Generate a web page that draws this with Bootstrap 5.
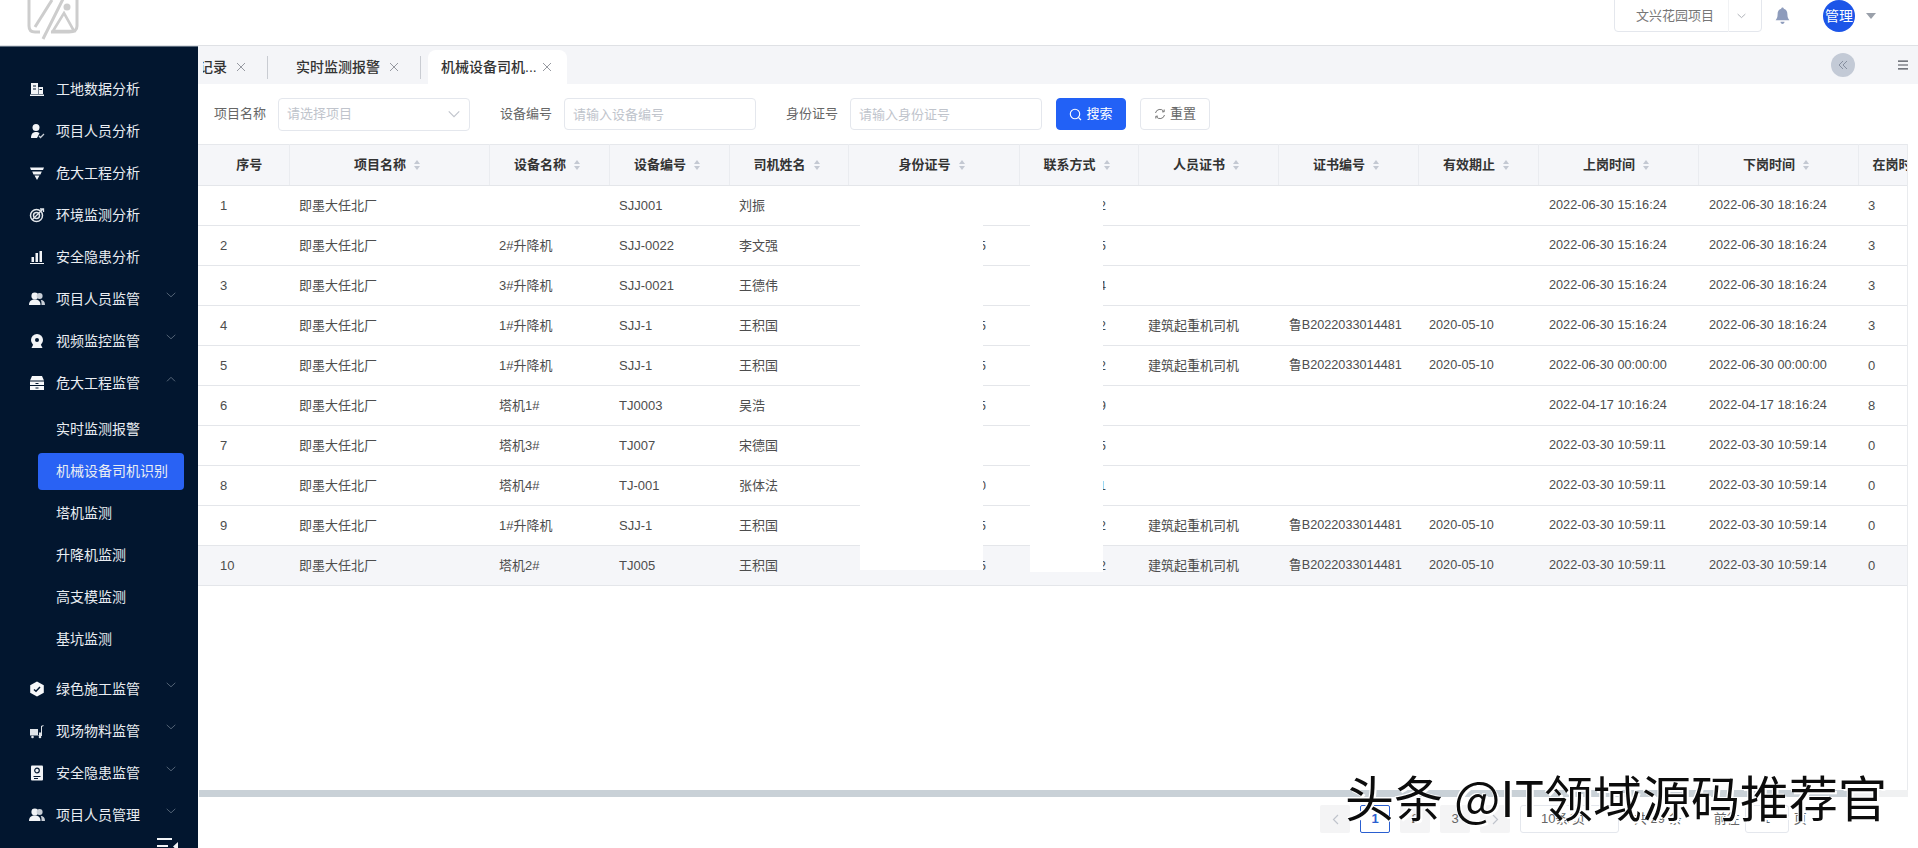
<!DOCTYPE html>
<html lang="zh-CN"><head><meta charset="utf-8"><title>机械设备司机识别</title>
<link rel="stylesheet" href="https://cdn.jsdelivr.net/npm/bootstrap@5.3.0/dist/css/bootstrap.min.css">
<style>
html,body{height:848px;overflow:hidden;margin:0}
body{font-family:"Liberation Sans","Noto Sans CJK SC",sans-serif;font-size:13px;color:#555;background:#fff}
.top-bar{height:46px;border-bottom:1px solid #dfe1e5;position:relative;overflow:hidden;flex:none}
.logo-mark{margin-left:27px;margin-top:-2px;display:block}
.proj-pick{width:148px;height:33px;margin-top:-1px;border:1px solid #e4e7ed;border-radius:0 0 4px 4px;color:#777;padding-left:21px}
.proj-pick span.nm{width:92px}
.proj-div{width:1px;height:32px;background:#f1f2f4}
.bell-ic{margin-left:13px;margin-right:33px}
.avatar-c{width:32px;height:32px;border-radius:50%;background:#1c55e8;color:#fff;font-size:14px;line-height:1}
.caret-d{width:0;height:0;border:5px solid transparent;border-top:6px solid #9aa0aa;border-bottom:0;margin-left:11px;margin-right:42px}
.shell{height:802px}
.side-nav{width:198px;flex:none;background:#02162f;padding-top:21px;color:#e9edf2;font-size:14px;position:relative;overflow:hidden;border-top:1px solid #5b6b7c}
.nav-it{height:42px;padding-left:29px;position:relative}
.nav-it svg.ic{width:16px;height:16px;margin-right:11px;flex:none}
.nav-it .chev{position:absolute;left:166px;top:14px}
.sub-wrap{padding-top:5px;padding-bottom:7px}
.sub-it{height:42px;padding-left:56px;padding-top:10px;line-height:20px}
.sub-it.on{position:relative;z-index:0}
.sub-it.on::before{content:"";position:absolute;z-index:-1;left:38px;top:2px;width:146px;height:37px;background:#2962f4;border-radius:4px}
.nav-fold{position:absolute;left:157px;top:791px}
.main-c{min-width:0;flex:1}
.tab-strip{height:38px;background:#f4f5f8;flex:none;padding-left:5px}
.tab-scroll{overflow:hidden;flex:1;height:38px}
.tab-i{font-size:14px;font-weight:500;color:#333;height:34px;margin-top:4px;white-space:nowrap;flex:none}
.tab-a{margin-left:-4px;padding-right:21px}
.tab-b{padding-left:28px;padding-right:21px}
.tab-c{background:#fff;border-radius:8px 8px 0 0;padding-left:13px;padding-right:15px;margin-left:7px}
.tab-sep{width:1px;height:23px;background:#c9ccd2;flex:none;margin-top:10px}
.x-ic{width:10px;height:10px;margin-left:9px;flex:none}
.x-near{margin-left:5px}
.fold-b{width:24px;height:24px;border-radius:50%;background:#c3cad6;margin-right:43px}
.menu-b{width:10px;height:10px;margin-right:10px}
.filter-row{height:60px;flex:none;padding-left:16px}
.f-lb{width:53px;color:#666;white-space:nowrap;margin-right:11px;font-size:13px}
.f-ct{width:192px;height:32px;font-size:13px;padding:0 8px;border-color:#e4e7ed;border-radius:4px;color:#c0c4cc;flex:none;margin-right:30px;min-height:0}
select.f-ct{height:33px;background-image:url("data:image/svg+xml,%3csvg xmlns='http://www.w3.org/2000/svg' viewBox='0 0 16 16'%3e%3cpath fill='none' stroke='%23c0c4cc' stroke-width='1.3' d='M2 5l6 6 6-6'/%3e%3c/svg%3e");background-size:14px 14px;background-position:right 8px center}
.f-ct::placeholder{color:#c0c4cc}
.act-b{height:32px;width:70px;font-size:13px;padding:0;border-radius:4px;margin-right:14px}
.act-s{background:#2261f6;border-color:#2261f6;color:#fff;margin-left:-16px}
.act-r{background:#fff;border:1px solid #e4e7ed;color:#666}
.grid-wrap{flex:1;min-height:0;overflow:hidden;position:relative;margin-right:10px;border-right:1px solid #e9ebee}
.data-t{table-layout:fixed;width:1750px;margin:0;font-size:13px;color:#4d4d4d;border-top:1px solid #e6e8ec;--bs-table-border-color:#e4e6ea}
.data-t th{height:41px;background:#f5f6f9;color:#333;font-weight:600;text-align:center;vertical-align:middle;padding:0 4px 0 0;border-right:1px solid #eaecf0;white-space:nowrap;box-shadow:none}
.data-t td{height:40px;padding:0 0 0 10px;vertical-align:middle;white-space:nowrap;overflow:hidden;color:#4d4d4d;box-shadow:none}
.data-t td:nth-child(n+9):nth-child(-n+12){font-size:12.7px;padding-left:11px}
.data-t th.c-no{padding:0 0 0 12px}
.data-t td.c-no{padding-left:22px}
.data-t th.c-last{text-align:left;padding-left:14px;border-right:0}
.data-t td.tail-a{text-align:right;padding:0 33px 0 0}
.data-t td.tail-b{text-align:right;padding:0 32px 0 0}
.data-t tr.row-h td{background:#f5f6f9}
.sort-m{display:inline-block;width:6px;height:10px;margin-left:8px;vertical-align:-1px;position:relative}
.sort-m::before,.sort-m::after{content:"";position:absolute;left:0;border:3px solid transparent}
.sort-m::before{top:0;border-top:0;border-bottom:4px solid #c3c8d2}
.sort-m::after{bottom:0;border-bottom:0;border-top:4px solid #c3c8d2}
.mask-a,.mask-b{position:absolute;background:#fff;top:43px}
.mask-a{left:662px;width:123px;height:383px}
.mask-b{left:832px;width:73px;height:385px}
.h-track{height:7px;flex:none;background:#f0f1f2;margin-right:10px;margin-left:1px}
.h-thumb{width:1652px;height:7px;background:#c9d1d7}
.pager-r{height:51px;flex:none;padding-top:8px;padding-left:1122px;font-size:13px;color:#666;align-items:flex-start}
.pg-b{width:30px;height:28px;background:#f4f4f5;color:#666;margin-right:10px;flex:none;border-radius:2px}
.pg-b.cur{background:#fff;border:1px solid #2a5fd0;color:#2a5fd0;font-weight:700}
.pg-sel{width:99px;height:28px;border:1px solid #e4e7ed;border-radius:3px;color:#666;margin-right:15px;flex:none;padding-left:20px}
.pg-in{width:44px;height:28px;border:1px solid #e4e7ed;border-radius:3px;margin:0 5px}
.pg-t{height:28px;line-height:28px;white-space:nowrap}
.mark-over{position:absolute;left:1345px;top:761px;font-size:49px;line-height:70px;color:#0c0c0c;font-weight:400;white-space:nowrap;text-shadow:2px 2px 0 #fff,-1px -1px 0 #fff;font-family:"Noto Sans CJK SC",sans-serif;z-index:5}
</style></head>
<body>
<svg width="0" height="0" class="position-absolute">
<defs>
<symbol id="i-chev" viewBox="0 0 14 8"><path d="M1 1l6 5.500L13 1" fill="none" stroke="#59687a" stroke-width="1.300"/></symbol>
<symbol id="i-two" viewBox="0 0 16 16"><circle cx="5.800" cy="5" r="3.400" fill="#f2f4f7"/><circle cx="10.600" cy="5" r="3" fill="#c9cfd7"/><path d="M0 14c0-4 2.400-5.500 5.800-5.500S11.500 10 11.500 14z" fill="#f2f4f7"/><path d="M12.500 14H16c0-3.400-1.500-5-4.500-5.200 1 1.200 1 3.200 1 5.200z" fill="#c9cfd7"/></symbol>
</defs></svg>

<div class="d-flex flex-column">
<header class="top-bar d-flex align-items-start justify-content-between">
  <svg class="logo-mark" width="52" height="42" viewBox="0 0 52 42" fill="none" stroke="#cdcdcd" stroke-width="3" aria-hidden="true"><path d="M8 -6Q2 -6 2 0V28Q2 34 8 34H13"/><path d="M24 34H42Q50 34 50 28V0Q50-6 42-6H30"/><path d="M16 41L36 1"/><path d="M8 29L25 2"/><path d="M26 33L37 15L47 33Z" stroke-width="2.600"/><circle cx="40" cy="9" r="3.500" fill="#cdcdcd" stroke="none"/></svg>
  <div class="d-flex align-items-center">
    <div class="proj-pick d-flex align-items-center"><span class="nm">文兴花园项目</span><span class="proj-div"></span><svg class="ms-2" width="9" height="6" viewBox="0 0 14 8"><path d="M1 1l6 5.500L13 1" fill="none" stroke="#a0a4ab" stroke-width="1.300"/></svg></div>
    <svg class="bell-ic" width="15" height="18" viewBox="0 0 15 18" aria-hidden="true"><path d="M7.500 0.500c.8 0 1.300.6 1.300 1.300 2.500.7 3.600 2.800 3.600 5.400 0 3 .7 4.300 2 6.100H.6c1.300-1.800 2-3.100 2-6.100 0-2.600 1.100-4.700 3.600-5.400 0-.7.500-1.300 1.300-1.300zM5.500 14.800h4c0 1.300-.9 2.200-2 2.200s-2-.9-2-2.200z" fill="#8e9cbc"/></svg>
    <div class="avatar-c d-flex align-items-center justify-content-center">管理</div>
    <span class="caret-d"></span>
  </div>
</header>

<div class="shell d-flex">
<nav class="side-nav">
  <div class="nav-it d-flex align-items-center"><svg class="ic" viewBox="0 0 16 16" fill="#f2f4f7"><path d="M2 2h7v11H2zM9.500 6H14v7H9.500zM1 13.500h14V15H1z"/><path d="M4 4.500h3v1H4zM4 7.500h3v1H4zM10.500 8H13v1h-2.500z" fill="#02162f"/></svg>工地数据分析</div>
  <div class="nav-it d-flex align-items-center"><svg class="ic" viewBox="0 0 16 16" fill="#f2f4f7"><circle cx="7" cy="4.500" r="3.500"/><path d="M2 15c0-4 1.800-6 5-6 1.500 0 2.700.4 3.500 1.300L8 15z"/><path d="M10 13l1.500 1.500L15 11" fill="none" stroke="#c9cfd7" stroke-width="1.300"/></svg>项目人员分析</div>
  <div class="nav-it d-flex align-items-center"><svg class="ic" viewBox="0 0 16 16" fill="#f2f4f7"><path d="M1 2.500h14l-1 2.500H2zM3.200 6.500h9.600L11.500 9.500h-7zM5.500 10.500h5L8 15z"/></svg>危大工程分析</div>
  <div class="nav-it d-flex align-items-center"><svg class="ic" viewBox="0 0 16 16" fill="none" stroke="#e2e6eb"><circle cx="7.500" cy="8.500" r="6" stroke-width="1.500"/><circle cx="7.500" cy="8.500" r="3" stroke-width="1.500"/><path d="M3 13L14 2M11 2h3.500v3" stroke-width="1.300"/></svg>环境监测分析</div>
  <div class="nav-it d-flex align-items-center"><svg class="ic" viewBox="0 0 16 16" fill="#f2f4f7"><path d="M2.500 8h2.500v5H2.500zM6.500 4h2.500v9H6.500zM10.500 2h2.500v11H10.500zM1 14h14v1H1z"/></svg>安全隐患分析</div>
  <div class="nav-it d-flex align-items-center"><svg class="ic"><use href="#i-two"/></svg>项目人员监管<svg class="chev" width="10" height="6"><use href="#i-chev"/></svg></div>
  <div class="nav-it d-flex align-items-center"><svg class="ic" viewBox="0 0 16 16" fill="#f2f4f7"><circle cx="8" cy="7" r="6"/><circle cx="8" cy="7" r="2" fill="#02162f"/><path d="M4 12h8l1.500 3h-11z"/></svg>视频监控监管<svg class="chev" width="10" height="6"><use href="#i-chev"/></svg></div>
  <div class="nav-it d-flex align-items-center"><svg class="ic" viewBox="0 0 16 16" fill="#f7f8fa"><path d="M3 1h10l2 4.500H1z"/><path d="M1 6.500h14V10H1zM1 11h14v4H1z"/><path d="M6.500 8h3v1h-3zM6.500 12.500h3v1h-3z" fill="#02162f"/></svg>危大工程监管<svg class="chev chev-up" width="10" height="6" viewBox="0 0 10 6"><path d="M1 5.300L5 1.300l4 4" fill="none" stroke="#59687a" stroke-width="1"/></svg></div>
  <div class="sub-wrap">
    <div class="sub-it">实时监测报警</div>
    <div class="sub-it on">机械设备司机识别</div>
    <div class="sub-it">塔机监测</div>
    <div class="sub-it">升降机监测</div>
    <div class="sub-it">高支模监测</div>
    <div class="sub-it">基坑监测</div>
  </div>
  <div class="nav-it d-flex align-items-center"><svg class="ic" viewBox="0 0 16 16"><path d="M8 .5l6.800 3.800v7.400L8 15.500l-6.800-3.800V4.300z" fill="#f7f8fa"/><path d="M5 8.500l2 1.800 4-4.300" fill="none" stroke="#02162f" stroke-width="1.500"/></svg>绿色施工监管<svg class="chev" width="10" height="6"><use href="#i-chev"/></svg></div>
  <div class="nav-it d-flex align-items-center"><svg class="ic" viewBox="0 0 16 16" fill="#dfe3e8"><path d="M1 6h8v6H1zM10 9.500h2V3l2.500-1v1l-1.500.7V13H1v-.5h9z"/><circle cx="3.500" cy="14" r="1.300"/><circle cx="11" cy="14" r="1.300"/></svg>现场物料监管<svg class="chev" width="10" height="6"><use href="#i-chev"/></svg></div>
  <div class="nav-it d-flex align-items-center"><svg class="ic" viewBox="0 0 16 16"><rect x="2" y="0.500" width="12" height="15" rx="1" fill="#f2f4f7"/><circle cx="8" cy="5.500" r="2.300" fill="none" stroke="#02162f" stroke-width="1.200"/><path d="M4.500 11.500h7M5 13.500h4" stroke="#02162f" stroke-width="1.100"/></svg>安全隐患监管<svg class="chev" width="10" height="6"><use href="#i-chev"/></svg></div>
  <div class="nav-it d-flex align-items-center"><svg class="ic"><use href="#i-two"/></svg>项目人员管理<svg class="chev" width="10" height="6"><use href="#i-chev"/></svg></div>
  <svg class="nav-fold" width="22" height="14" viewBox="0 0 22 14" aria-hidden="true"><path d="M0 0h15v2H0zM0 7h11v2H0zM0 13h15v1H0z" fill="#f2f4f7"/><path d="M21 4v9l-5-4.500z" fill="#f2f4f7"/></svg>
</nav>

<main class="main-c d-flex flex-column">
  <div class="tab-strip d-flex">
    <div class="tab-scroll d-flex">
      <div class="tab-i tab-a d-flex align-items-center">记录<svg class="x-ic" viewBox="0 0 10 10"><path d="M1 1l8 8M9 1l-8 8" stroke="#8b8f96" stroke-width=".9"/></svg></div>
      <span class="tab-sep"></span>
      <div class="tab-i tab-b d-flex align-items-center">实时监测报警<svg class="x-ic" viewBox="0 0 10 10"><path d="M1 1l8 8M9 1l-8 8" stroke="#8b8f96" stroke-width=".9"/></svg></div>
      <span class="tab-sep"></span>
      <div class="tab-i tab-c d-flex align-items-center">机械设备司机...<svg class="x-ic x-near" viewBox="0 0 10 10"><path d="M1 1l8 8M9 1l-8 8" stroke="#8b8f96" stroke-width=".9"/></svg></div>
    </div>
    <div class="d-flex align-items-center">
      <div class="fold-b d-flex align-items-center justify-content-center"><svg width="10" height="10" viewBox="0 0 10 10" fill="none" stroke="#7f889a" stroke-width=".9"><path d="M5 1L1 5l4 4M9 1L5 5l4 4"/></svg></div>
      <svg class="menu-b" viewBox="0 0 10 10"><path d="M0 .5h10v1.200H0zM0 4.400h10v1.200H0zM0 8.300h10v1.200H0z" fill="#4a4f57"/></svg>
    </div>
  </div>

  <form class="filter-row d-flex align-items-center">
    <label class="f-lb">项目名称</label>
    <select class="form-select f-ct" aria-label="项目名称"><option>请选择项目</option></select>
    <label class="f-lb">设备编号</label>
    <input class="form-control f-ct" placeholder="请输入设备编号">
    <label class="f-lb">身份证号</label>
    <input class="form-control f-ct" placeholder="请输入身份证号">
    <button type="button" class="btn act-b act-s d-flex align-items-center justify-content-center gap-1"><svg width="13" height="13" viewBox="0 0 13 13" fill="none" stroke="#fff" stroke-width="1.100"><circle cx="6" cy="6" r="4.700"/><path d="M9.500 9.500l2.500 2.500"/></svg>搜索</button>
    <button type="button" class="btn act-b act-r d-flex align-items-center justify-content-center gap-1"><svg width="12" height="12" viewBox="0 0 12 12" fill="none" stroke="#777" stroke-width="1"><path d="M1.500 5A4.600 4.600 0 0 1 9.800 3.400M10.500 7A4.600 4.600 0 0 1 2.200 8.600"/><path d="M10.200 1.500v2.300H8M1.800 10.500V8.200H4"/></svg>重置</button>
  </form>

  <div class="grid-wrap">
    <table class="table data-t">
      <colgroup><col style="width:91px"><col style="width:200px"><col style="width:120px"><col style="width:120px"><col style="width:119px"><col style="width:171px"><col style="width:119px"><col style="width:140px"><col style="width:140px"><col style="width:120px"><col style="width:160px"><col style="width:160px"><col style="width:90px"></colgroup>
      <thead><tr>
        <th class="c-no">序号</th><th>项目名称<i class="sort-m"></i></th><th>设备名称<i class="sort-m"></i></th><th>设备编号<i class="sort-m"></i></th><th>司机姓名<i class="sort-m"></i></th><th>身份证号<i class="sort-m"></i></th><th>联系方式<i class="sort-m"></i></th><th>人员证书<i class="sort-m"></i></th><th>证书编号<i class="sort-m"></i></th><th>有效期止<i class="sort-m"></i></th><th>上岗时间<i class="sort-m"></i></th><th>下岗时间<i class="sort-m"></i></th><th class="c-last">在岗时长</th>
      </tr></thead>
      <tbody>
        <tr><td class="c-no">1</td><td>即墨大任北厂</td><td></td><td>SJJ001</td><td>刘振</td><td class="tail-a"></td><td class="tail-b">2</td><td></td><td></td><td></td><td>2022-06-30 15:16:24</td><td>2022-06-30 18:16:24</td><td>3</td></tr>
        <tr><td class="c-no">2</td><td>即墨大任北厂</td><td>2#升降机</td><td>SJJ-0022</td><td>李文强</td><td class="tail-a">5</td><td class="tail-b">5</td><td></td><td></td><td></td><td>2022-06-30 15:16:24</td><td>2022-06-30 18:16:24</td><td>3</td></tr>
        <tr><td class="c-no">3</td><td>即墨大任北厂</td><td>3#升降机</td><td>SJJ-0021</td><td>王德伟</td><td class="tail-a"></td><td class="tail-b">4</td><td></td><td></td><td></td><td>2022-06-30 15:16:24</td><td>2022-06-30 18:16:24</td><td>3</td></tr>
        <tr><td class="c-no">4</td><td>即墨大任北厂</td><td>1#升降机</td><td>SJJ-1</td><td>王积国</td><td class="tail-a">5</td><td class="tail-b">2</td><td>建筑起重机司机</td><td>鲁B2022033014481</td><td>2020-05-10</td><td>2022-06-30 15:16:24</td><td>2022-06-30 18:16:24</td><td>3</td></tr>
        <tr><td class="c-no">5</td><td>即墨大任北厂</td><td>1#升降机</td><td>SJJ-1</td><td>王积国</td><td class="tail-a">5</td><td class="tail-b">2</td><td>建筑起重机司机</td><td>鲁B2022033014481</td><td>2020-05-10</td><td>2022-06-30 00:00:00</td><td>2022-06-30 00:00:00</td><td>0</td></tr>
        <tr><td class="c-no">6</td><td>即墨大任北厂</td><td>塔机1#</td><td>TJ0003</td><td>吴浩</td><td class="tail-a">5</td><td class="tail-b">9</td><td></td><td></td><td></td><td>2022-04-17 10:16:24</td><td>2022-04-17 18:16:24</td><td>8</td></tr>
        <tr><td class="c-no">7</td><td>即墨大任北厂</td><td>塔机3#</td><td>TJ007</td><td>宋德国</td><td class="tail-a"></td><td class="tail-b">5</td><td></td><td></td><td></td><td>2022-03-30 10:59:11</td><td>2022-03-30 10:59:14</td><td>0</td></tr>
        <tr><td class="c-no">8</td><td>即墨大任北厂</td><td>塔机4#</td><td>TJ-001</td><td>张体法</td><td class="tail-a">0</td><td class="tail-b">1</td><td></td><td></td><td></td><td>2022-03-30 10:59:11</td><td>2022-03-30 10:59:14</td><td>0</td></tr>
        <tr><td class="c-no">9</td><td>即墨大任北厂</td><td>1#升降机</td><td>SJJ-1</td><td>王积国</td><td class="tail-a">5</td><td class="tail-b">2</td><td>建筑起重机司机</td><td>鲁B2022033014481</td><td>2020-05-10</td><td>2022-03-30 10:59:11</td><td>2022-03-30 10:59:14</td><td>0</td></tr>
        <tr class="row-h"><td class="c-no">10</td><td>即墨大任北厂</td><td>塔机2#</td><td>TJ005</td><td>王积国</td><td class="tail-a">5</td><td class="tail-b">2</td><td>建筑起重机司机</td><td>鲁B2022033014481</td><td>2020-05-10</td><td>2022-03-30 10:59:11</td><td>2022-03-30 10:59:14</td><td>0</td></tr>
      </tbody>
    </table>
    <div class="mask-a"></div><div class="mask-b"></div>
  </div>
  <div class="h-track"><div class="h-thumb"></div></div>
  <div class="pager-r d-flex">
    <div class="pg-b d-flex align-items-center justify-content-center"><svg width="7" height="11" viewBox="0 0 7 11" fill="none" stroke="#c0c4cc" stroke-width="1.200"><path d="M6 1L1.500 5.500 6 10"/></svg></div>
    <div class="pg-b cur d-flex align-items-center justify-content-center">1</div>
    <div class="pg-b d-flex align-items-center justify-content-center">2</div>
    <div class="pg-b d-flex align-items-center justify-content-center">3</div>
    <div class="pg-b d-flex align-items-center justify-content-center"><svg width="7" height="11" viewBox="0 0 7 11" fill="none" stroke="#c0c4cc" stroke-width="1.200"><path d="M1 1l4.500 4.500L1 10"/></svg></div>
    <div class="pg-sel d-flex align-items-center">10条/页</div>
    <span class="pg-t me-4">共 29 条</span>
    <span class="pg-t ms-2">前往</span>
    <div class="pg-in d-flex align-items-center justify-content-center">1</div>
    <span class="pg-t">页</span>
  </div>
</main>
</div>
</div>
<div class="mark-over">头条 @IT领域源码推荐官</div>
</body></html>
